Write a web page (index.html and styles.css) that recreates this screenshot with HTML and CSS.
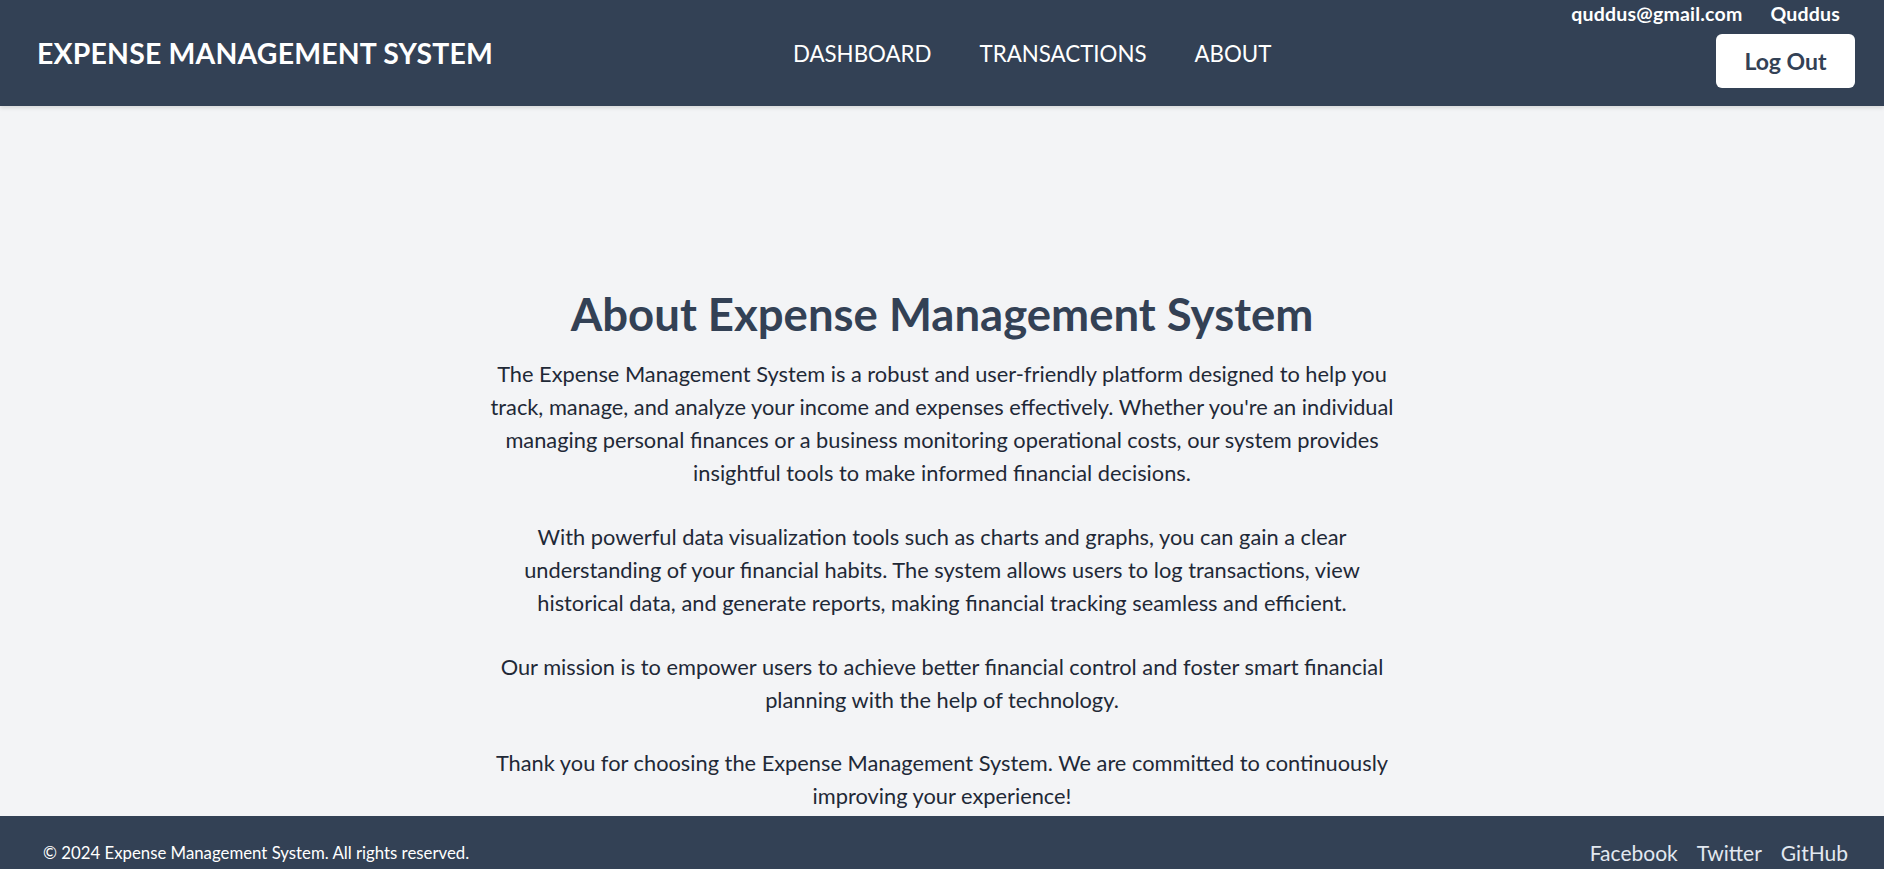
FILE: index.html
```html
<!DOCTYPE html>
<html lang="en">
<head>
<meta charset="utf-8">
<title>About - Expense Management System</title>
<link rel="stylesheet" href="styles.css">
</head>
<body>
<header class="topbar">
  <div class="brand">EXPENSE MANAGEMENT SYSTEM</div>
  <nav class="nav">
    <a href="#" class="nav-link">DASHBOARD</a>
    <a href="#" class="nav-link">TRANSACTIONS</a>
    <a href="#" class="nav-link">ABOUT</a>
  </nav>
  <div class="account">
    <div class="user-row">
      <span class="user-email">quddus@gmail.com</span>
      <span class="user-name">Quddus</span>
    </div>
    <button class="logout">Log Out</button>
  </div>
</header>
<main class="about">
  <h1 class="about-title">About Expense Management System</h1>
  <p class="about-text">The Expense Management System is a robust and user-friendly platform designed to help you track, manage, and analyze your income and expenses effectively. Whether you're an individual managing personal finances or a business monitoring operational costs, our system provides insightful tools to make informed financial decisions.</p>
  <p class="about-text">With powerful data visualization tools such as charts and graphs, you can gain a clear understanding of your financial habits. The system allows users to log transactions, view historical data, and generate reports, making financial tracking seamless and efficient.</p>
  <p class="about-text">Our mission is to empower users to achieve better financial control and foster smart financial planning with the help of technology.</p>
  <p class="about-text">Thank you for choosing the Expense Management System. We are committed to continuously improving your experience!</p>
</main>
<footer class="footer">
  <p class="copyright">© 2024 Expense Management System. All rights reserved.</p>
  <div class="social">
    <a href="#" class="social-link">Facebook</a>
    <a href="#" class="social-link">Twitter</a>
    <a href="#" class="social-link">GitHub</a>
  </div>
</footer>
</body>
</html>
```

FILE: styles.css
```css
* { box-sizing: border-box; }
html, body { margin: 0; padding: 0; }
body {
  font-family: Lato, "Open Sans", "Liberation Sans", sans-serif;
  background: #f3f4f6;
  color: #1f2937;
}
a { text-decoration: none; color: inherit; }

.topbar {
  height: 106px;
  background: #334155;
  color: #ffffff;
  display: flex;
  align-items: center;
  justify-content: space-between;
  padding: 0 29px 0 37px;
  box-shadow: 0 2px 4px rgba(0,0,0,0.12);
  position: relative;
}
.brand {
  font-size: 28.4px;
  font-weight: 700;
  letter-spacing: 0.2px;
}
.nav {
  display: flex;
  gap: 48px;
}
.nav-link {
  font-size: 22.3px;
  color: #ffffff;
}
.account {
  align-self: flex-start;
  display: flex;
  flex-direction: column;
  align-items: flex-end;
}
.user-row {
  display: flex;
  gap: 28px;
  font-size: 19.5px;
  font-weight: 700;
  letter-spacing: 0.2px;
  line-height: 28px;
  padding-right: 15px;
}
.logout {
  margin-top: 6px;
  width: 139px;
  height: 54px;
  background: #ffffff;
  color: #334155;
  border: none;
  border-radius: 6px;
  font-family: inherit;
  font-size: 23px;
  font-weight: 700;
}

.about {
  max-width: 912px;
  margin: 0 auto;
  padding: 180px 0 0;
  text-align: center;
}
.about-title {
  margin: 0 0 15px;
  font-size: 45.5px;
  line-height: 56px;
  font-weight: 700;
  color: #334155;
}
.about-text {
  margin: 0 0 31px;
  font-size: 21.8px;
  line-height: 33px;
  color: #1f2937;
}
.about-text:nth-of-type(3) { margin-bottom: 30px; }
.about-text:last-child { margin-bottom: 4px; }

.footer {
  background: #334155;
  color: #ffffff;
  display: flex;
  justify-content: space-between;
  align-items: center;
  padding: 24px 36px 30px 43px;
}
.copyright {
  margin: 0;
  font-size: 16.8px;
}
.social {
  display: flex;
  gap: 19px;
}
.social-link {
  font-size: 21px;
  color: #e2e8f0;
}
```
